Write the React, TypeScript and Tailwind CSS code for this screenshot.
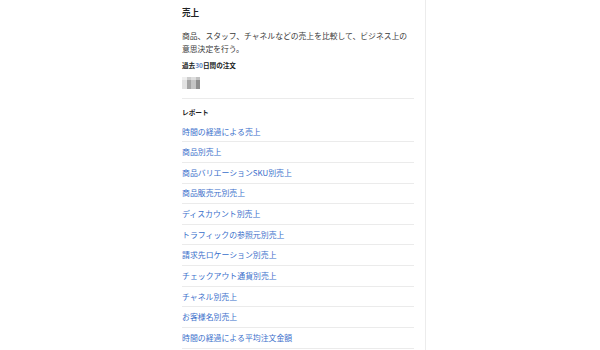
import React from "react";

const links = [
  "時間の経過による売上",
  "商品別売上",
  "商品バリエーションSKU別売上",
  "商品販売元別売上",
  "ディスカウント別売上",
  "トラフィックの参照元別売上",
  "請求先ロケーション別売上",
  "チェックアウト通貨別売上",
  "チャネル別売上",
  "お客様名別売上",
  "時間の経過による平均注文金額",
];

export default function App() {
  return (
    <div
      className="w-[600px] h-[350px] bg-white overflow-hidden flex"
      style={{ fontFamily: '"Noto Sans CJK JP", "Noto Sans", sans-serif' }}
    >
      <div className="w-[426px] h-full border-r border-[#ececec] pl-[182px] pr-[11px] shrink-0">
        <div className="pt-[6px] h-[27px] text-[8.6px] leading-[12px] font-bold text-[#202223]">
          売上
        </div>
        <div className="text-[7.8px] leading-[13px] text-[#3a3a3a] pt-[2px]">
          商品、スタッフ、チャネルなどの売上を比較して、ビジネス上の意思決定を行う。
        </div>
        <div className="mt-[5px] text-[6.6px] leading-[10px] font-bold text-[#202223]">
          過去<span className="text-[#5a7fc0]">30</span>日間の注文
        </div>
        <div className="mt-[7px] h-[12px] flex">
          <svg width="20" height="12" viewBox="0 0 20 12">
            <defs>
              <filter id="b" x="-20%" y="-20%" width="140%" height="140%">
                <feGaussianBlur stdDeviation="0.6" />
              </filter>
            </defs>
            <g filter="url(#b)">
              <rect x="0" y="0" width="5" height="12" fill="#e2e2e2" />
              <rect x="5" y="0" width="4" height="12" fill="#a4a4a4" />
              <rect x="9" y="0" width="5" height="12" fill="#c4c4c4" />
              <rect x="14" y="0" width="4" height="12" fill="#8e8e8e" />
              <rect x="0" y="0" width="18" height="3" fill="#ffffff" opacity="0.45" />
            </g>
          </svg>
        </div>
        <div className="mt-[9px] border-b border-[#ebebeb]" />
        <div className="pt-[8px] h-[22.65px] text-[6.7px] leading-[10px] font-bold text-[#202223]">
          レポート
        </div>
        <div className="flex flex-col">
          {links.map((l) => (
            <div
              key={l}
              className="h-[20.65px] shrink-0 flex items-center border-b border-[#ebebeb] text-[7.9px] text-[#3a6fcb]"
            >
              {l}
            </div>
          ))}
        </div>
      </div>
      <div className="flex-1" />
    </div>
  );
}
